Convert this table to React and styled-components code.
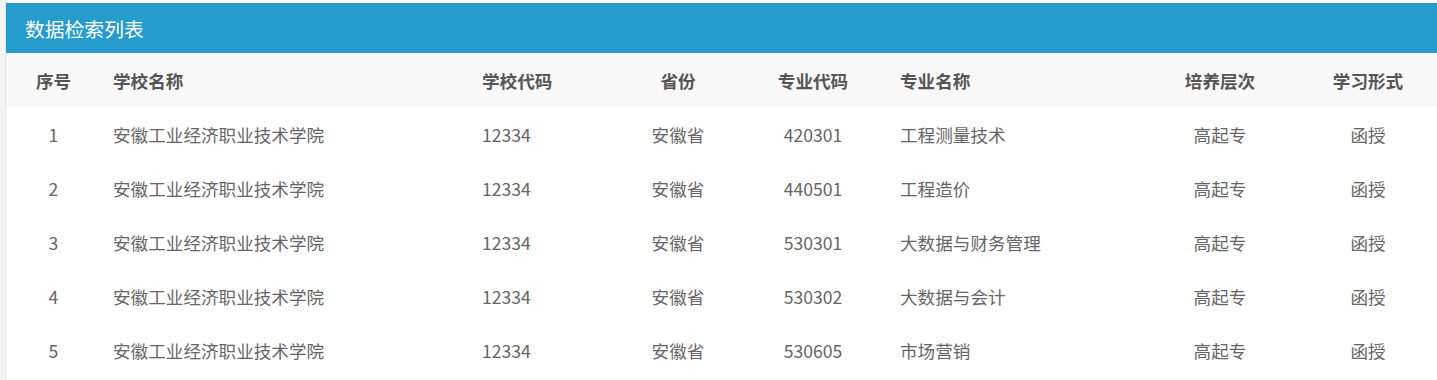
import styled, { createGlobalStyle } from "styled-components";

const GlobalStyle = createGlobalStyle`
    body{
        margin:0;
        background:#fff;
        font-family:"Noto Sans CJK SC", "Noto Sans", sans-serif;
    }
`;

const Page = styled.div`
    display:flex;
    padding-top:3px;
    min-height:377px;
`;

const SideStrip = styled.div`
    width:5px;
    background:#f4f4f4;
    border-right:1px solid #e6e6e6;
    margin-top:-3px;
`;

const Panel = styled.div`
    flex:1;
    display:flex;
    flex-direction:column;
`;

const PanelTitle = styled.div`
    height:50px;
    background:#269ccd;
    color:#fff;
    font-size:19.8px;
    display:flex;
    align-items:center;
    padding-left:19px;
`;

const COLS = "95px 369px 140px 136px 134px 261px 158px 1fr";

const Row = styled.div`
    display:grid;
    grid-template-columns:${COLS};
    height:54px;
    align-items:center;
    background:${props=>props.$head ? "#f9f9f9" : "#fff"};
    color:${props=>props.$head ? "#555" : "#666"};
    font-weight:${props=>props.$head ? 700 : 400};
    font-size:17.6px;
`;

const Cell = styled.div`
    text-align:${props=>props.$align};
    padding:0 ${props=>props.$pad}px;
    white-space:nowrap;
`;

const columns = [
    { title:"序号", align:"center", pad:12 },
    { title:"学校名称", align:"left", pad:12 },
    { title:"学校代码", align:"left", pad:12 },
    { title:"省份", align:"center", pad:0 },
    { title:"专业代码", align:"center", pad:0 },
    { title:"专业名称", align:"left", pad:20 },
    { title:"培养层次", align:"center", pad:0 },
    { title:"学习形式", align:"center", pad:0 },
];

const school = "安徽工业经济职业技术学院";

const rows = [
    ["1", school, "12334", "安徽省", "420301", "工程测量技术", "高起专", "函授"],
    ["2", school, "12334", "安徽省", "440501", "工程造价", "高起专", "函授"],
    ["3", school, "12334", "安徽省", "530301", "大数据与财务管理", "高起专", "函授"],
    ["4", school, "12334", "安徽省", "530302", "大数据与会计", "高起专", "函授"],
    ["5", school, "12334", "安徽省", "530605", "市场营销", "高起专", "函授"],
];

function App() {
    return (
        <>
            <GlobalStyle />
            <Page>
                <SideStrip />
                <Panel>
                    <PanelTitle>数据检索列表</PanelTitle>
                    <Row $head>
                        {columns.map(c=>(
                            <Cell key={c.title} $align={c.align} $pad={c.pad}>{c.title}</Cell>
                        ))}
                    </Row>
                    {rows.map(r=>(
                        <Row key={r[0]}>
                            {r.map((v, i)=>(
                                <Cell key={i} $align={columns[i].align} $pad={columns[i].pad}>{v}</Cell>
                            ))}
                        </Row>
                    ))}
                </Panel>
            </Page>
        </>
    );
}

export default App;
